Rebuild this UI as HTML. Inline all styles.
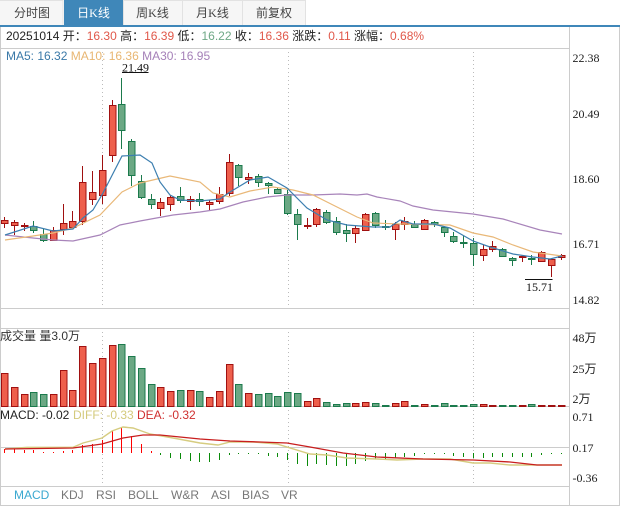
<!DOCTYPE html>
<html><head><meta charset="utf-8"><style>
html,body{margin:0;padding:0;background:#fff;width:620px;height:506px;overflow:hidden}
svg{display:block}
text{font-family:"Liberation Sans","Noto Sans CJK SC",sans-serif;font-size:12px;white-space:pre}
.s{font-family:"Liberation Serif","Noto Sans CJK SC",serif;fill:#222}
.t{fill:#444;text-anchor:middle}
.b{fill:#777}
</style></head><body>
<svg width="620" height="506" viewBox="0 0 620 506" xmlns="http://www.w3.org/2000/svg">
<g fill="#f6f6f6" stroke="#e2e2e2">
<rect x="-1" y="0.5" width="64" height="26"/><rect x="123.500" y="0.5" width="59" height="26"/><rect x="182.500" y="0.5" width="60" height="26"/><rect x="242.500" y="0.5" width="63" height="26"/>
</g>
<rect x="64" y="0" width="59" height="26" fill="#3f87b9"/>
<rect x="0" y="25" width="620" height="2" fill="#3f87b9"/>
<text class="t" x="32" y="17">分时图</text>
<text class="t" x="93.500" y="17" style="fill:#fff">日<tspan style="font-family:'Liberation Serif'">K</tspan>线</text>
<text class="t" x="152.500" y="17">周<tspan style="font-family:'Liberation Serif'">K</tspan>线</text>
<text class="t" x="212.500" y="17">月<tspan style="font-family:'Liberation Serif'">K</tspan>线</text>
<text class="t" x="274" y="17">前复权</text>

<g stroke="#ccc" fill="none">
<path d="M0.500 27V506M569.500 27V506M619.500 27V506M0 505.500H620M0 48.500H569M0 308.500H569M0 328.500H569M0 406.500H569M0 447.500H569M0 486.500H569"/>
</g>
<g stroke="#bbb" fill="none" stroke-dasharray="1 3">
<path d="M102.500 52V308M288.500 52V308M473.500 52V308M102.500 332V406M288.500 332V406M473.500 332V406M102.500 410V486M288.500 410V486M473.500 410V486"/>
</g>

<text x="6" y="40" fill="#222">20251014 开：<tspan fill="#e0584a">16.30</tspan> 高：<tspan fill="#e0584a">16.39</tspan> 低：<tspan fill="#6fa886">16.22</tspan> 收：<tspan fill="#e0584a">16.36</tspan> 涨跌：<tspan fill="#e0584a">0.11</tspan> 涨幅：<tspan fill="#e0584a">0.68%</tspan></text>
<text x="6" y="60" fill="#3a79a8">MA5: 16.32 <tspan fill="#e8b672">MA10: 16.36</tspan> <tspan fill="#a580b8">MA30: 16.95</tspan></text>

<!-- wicks -->
<path fill="none" stroke="#a01010" d="M4.500 217V228M14.500 220V235M24.500 223V231M53.500 227V240M63.500 204V235M72.500 211V227M82.500 166V225M92.500 171V205M102.500 155V204M112.500 100V162M160.500 198V216M170.500 195V211M190.500 196V210M209.500 200V210M219.500 187V204M229.500 154V196M248.500 173V184M307.500 218V229M316.500 208V227M355.500 226V243M365.500 213V231M395.500 222V240M404.500 217V230M424.500 219V230M483.500 245V261M492.500 241V252M522.500 255V262M541.500 251V262M551.500 258V277M561.500 254V260"/>
<path fill="none" stroke="#1b7a4c" d="M33.500 221V233M43.500 229V242M121.500 78V149M131.500 139V186M141.500 175V199M151.500 194V209M180.500 187V203M199.500 193V206M238.500 164V186M258.500 174V187M268.500 182V194M277.500 188V194M287.500 190V215M297.500 209V240M326.500 210V224M336.500 217V235M346.500 224V242M375.500 212V228M385.500 220V230M414.500 221V228M434.500 221V227M444.500 226V237M453.500 232V243M463.500 236V248M473.500 238V266M502.500 248V257M512.500 257V266M531.500 255V265"/>
<!-- bodies -->
<g transform="translate(0.5 0)">
<path fill="#ee5f4c" stroke="#a01010" d="M1 220.500h6.500v3h-6.500zM11 222.500h6.500v3h-6.500zM21 225.500h6.500v1h-6.500zM50 230.500h6.500v10h-6.500zM60 223.500h6.500v6h-6.500zM69 221.500h6.500v6h-6.500zM79 182.500h6.500v39h-6.500zM89 192.500h6.500v7h-6.500zM99 170.500h6.500v25h-6.500zM109 105.500h6.500v50h-6.500zM157 202.500h6.500v6h-6.500zM167 197.500h6.500v7h-6.500zM187 199.500h6.500v2h-6.500zM206 202.500h6.500v2h-6.500zM216 194.500h6.500v7h-6.500zM226 162.500h6.500v31h-6.500zM245 177.500h6.500v2h-6.500zM304 225.500h6.500v1h-6.500zM313 209.500h6.500v15h-6.500zM352 228.500h6.500v5h-6.500zM362 214.500h6.500v16h-6.500zM392 224.500h6.500v5h-6.500zM401 221.500h6.500v3h-6.500zM421 220.500h6.500v9h-6.500zM480 249.500h6.500v6h-6.500zM489 246.500h6.500v3h-6.500zM519 256.500h6.500v1h-6.500zM538 252.500h6.500v9h-6.500zM548 259.500h6.500v6h-6.500zM558 255.500h6.500v2h-6.500z"/>
<path fill="#6ba884" stroke="#1b7a4c" d="M30 226.500h6.500v4h-6.500zM40 234.500h6.500v6h-6.500zM118 104.500h6.500v26h-6.500zM128 141.500h6.500v34h-6.500zM138 181.500h6.500v16h-6.500zM148 199.500h6.500v5h-6.500zM177 196.500h6.500v4h-6.500zM196 199.500h6.500v2h-6.500zM235 165.500h6.500v12h-6.500zM255 176.500h6.500v6h-6.500zM265 183.500h6.500v2h-6.500zM274 189.500h6.500v4h-6.500zM284 194.500h6.500v19h-6.500zM294 214.500h6.500v10h-6.500zM323 212.500h6.500v10h-6.500zM333 221.500h6.500v11h-6.500zM343 230.500h6.500v3h-6.500zM372 213.500h6.500v12h-6.500zM382 226.500h6.500v1h-6.500zM411 224.500h6.500v3h-6.500zM431 222.500h6.500v2h-6.500zM441 227.500h6.500v5h-6.500zM450 236.500h6.500v5h-6.500zM460 242.500h6.500v1h-6.500zM470 243.500h6.500v11h-6.500zM499 249.500h6.500v7h-6.500zM509 258.500h6.500v2h-6.500zM528 258.500h6.500v1h-6.500z"/>
</g>

<!-- MAs -->
<polyline fill="none" stroke="#a884ba" stroke-width="1.200" points="5,235 33,238 53,240 73,241 100,235 120,225 140,221 173,215 200,212 220,209 243,202 267,197 287,195 313,195 340,194 357,195 367,194 377,197 400,201 413,206 433,210 473,214 503,219 540,230 562,234"/>
<polyline fill="none" stroke="#e9b878" stroke-width="1.200" points="5,240 33,236 53,233 73,228 100,215 122,192 140,183 170,176 200,182 213,193 230,197 250,191 273,187 293,190 313,195 333,205 357,217 373,223 400,224 450,225 473,233 493,237 513,245 533,252 562,256"/>
<polyline fill="none" stroke="#3d7fb0" stroke-width="1.200" points="5,235 33,226 53,231 73,229 83,218 93,210 103,193 122,156 140,155 152,163 160,182 170,195 180,200 200,201 220,199 230,192 250,180 268,177 287,188 307,208 327,220 347,225 373,227 390,227 400,220 413,224 433,224 450,228 473,241 490,247 513,254 533,257 550,259 562,256"/>

<text class="s" x="122" y="71.500" style="fill:#111">21.49</text>
<path d="M122 72.500H148.500" stroke="#111"/>
<text class="s" x="526" y="291" style="fill:#111">15.71</text>
<path d="M525 279.500H552.500" stroke="#111"/>

<text class="s" x="572.500" y="62">22.38</text>
<text class="s" x="572.500" y="118">20.49</text>
<text class="s" x="572.500" y="183">18.60</text>
<text class="s" x="572.500" y="248">16.71</text>
<text class="s" x="572.500" y="304">14.82</text>
<text class="s" x="572.500" y="342">48万</text>
<text class="s" x="572.500" y="373">25万</text>
<text class="s" x="572.500" y="403">2万</text>
<text class="s" x="572.500" y="421">0.71</text>
<text class="s" x="572.500" y="452">0.17</text>
<text class="s" x="572.500" y="482">-0.36</text>

<!-- volume -->
<text x="0" y="340" fill="#333">成交量 量3.0万</text>
<g transform="translate(0.5 0)">
<path fill="#ee5f4c" stroke="#a01010" d="M1 373.500h6.500V406.500h-6.500zM11 387.500h6.500V406.500h-6.500zM21 394.500h6.500V406.500h-6.500zM50 394.500h6.500V406.500h-6.500zM60 370.500h6.500V406.500h-6.500zM69 390.500h6.500V406.500h-6.500zM79 346.500h6.500V406.500h-6.500zM89 363.500h6.500V406.500h-6.500zM99 358.500h6.500V406.500h-6.500zM109 345.500h6.500V406.500h-6.500zM157 387.500h6.500V406.500h-6.500zM167 391.500h6.500V406.500h-6.500zM187 390.500h6.500V406.500h-6.500zM206 397.500h6.500V406.500h-6.500zM216 391.500h6.500V406.500h-6.500zM226 364.500h6.500V406.500h-6.500zM245 393.500h6.500V406.500h-6.500zM304 401.500h6.500V406.500h-6.500zM313 398.500h6.500V406.500h-6.500zM352 403.500h6.500V406.500h-6.500zM362 402.500h6.500V406.500h-6.500zM392 403.500h6.500V406.500h-6.500zM401 401.500h6.500V406.500h-6.500zM421 404.500h6.500V406.500h-6.500zM480 404.500h6.500V406.500h-6.500zM489 405.500h6.500V406.500h-6.500zM519 405.500h6.500V406.500h-6.500zM538 405.500h6.500V406.500h-6.500zM548 405.500h6.500V406.500h-6.500zM558 405.500h6.500V406.500h-6.500z"/>
<path fill="#6ba884" stroke="#1b7a4c" d="M30 392.500h6.500V406.500h-6.500zM40 394.500h6.500V406.500h-6.500zM118 344.500h6.500V406.500h-6.500zM128 356.500h6.500V406.500h-6.500zM138 368.500h6.500V406.500h-6.500zM148 384.500h6.500V406.500h-6.500zM177 390.500h6.500V406.500h-6.500zM196 391.500h6.500V406.500h-6.500zM235 384.500h6.500V406.500h-6.500zM255 394.500h6.500V406.500h-6.500zM265 393.500h6.500V406.500h-6.500zM274 396.500h6.500V406.500h-6.500zM284 392.500h6.500V406.500h-6.500zM294 393.500h6.500V406.500h-6.500zM323 402.500h6.500V406.500h-6.500zM333 404.500h6.500V406.500h-6.500zM343 403.500h6.500V406.500h-6.500zM372 403.500h6.500V406.500h-6.500zM382 405.500h6.500V406.500h-6.500zM411 405.500h6.500V406.500h-6.500zM431 405.500h6.500V406.500h-6.500zM441 403.500h6.500V406.500h-6.500zM450 405.500h6.500V406.500h-6.500zM460 405.500h6.500V406.500h-6.500zM470 404.500h6.500V406.500h-6.500zM499 405.500h6.500V406.500h-6.500zM509 405.500h6.500V406.500h-6.500zM528 404.500h6.500V406.500h-6.500z"/>
</g>

<!-- MACD -->
<text x="0" y="419" fill="#222">MACD: -0.02</text>
<text x="73" y="419" fill="#d4ca7c">DIFF: -0.33</text>
<text x="137" y="419" fill="#cf3030">DEA: -0.32</text>
<path fill="none" stroke="#f00" d="M4.500 449V453M14.500 449V453M24.500 450V453M33.500 450V453M43.500 452V453M53.500 452V453M63.500 451V453M72.500 450V453M82.500 445V453M92.500 444V453M102.500 440V453M112.500 431V453M121.500 428V453M131.500 436V453M141.500 444V453M151.500 451V453"/>
<path fill="none" stroke="#0a8a0a" d="M160.500 453V455M170.500 453V458M180.500 453V459M190.500 453V461M199.500 453V462M209.500 453V462M219.500 453V460M229.500 453V455M238.500 453V454M248.500 453V454M258.500 453V454M268.500 453V456M277.500 453V457M287.500 453V460M297.500 453V464M307.500 453V466M316.500 453V464M326.500 453V465M336.500 453V466M346.500 453V466M355.500 453V464M365.500 453V461M375.500 453V459M385.500 453V459M395.500 453V458M404.500 453V457M414.500 453V456M424.500 453V454M434.500 453V454M444.500 453V454M453.500 453V456M463.500 453V457M473.500 453V458M483.500 453V458M492.500 453V457M502.500 453V457M512.500 453V457M522.500 453V457M531.500 453V457M541.500 453V455M551.500 453V454M561.500 453V454"/>
<polyline fill="none" stroke="#d6cc80" stroke-width="1.400" points="5,449 27,447.300 73,447.300 83,443 102,438 112,431 123,427 133,428 150,434 173,438 200,443 218,445 230,442 253,442 277,444 310,454 327,455 347,458 377,459 397,460 423,459 450,459 473,463 490,463 510,465 537,465 562,465"/>
<polyline fill="none" stroke="#c81e1e" stroke-width="1.300" points="5,449 73,448 102,444 123,438 143,435 160,435 200,439 230,441 260,442 287,443 310,447 343,453 377,457 423,459 473,460 510,462 537,465 562,465"/>

<text x="14" y="499" fill="#3aa8d0">MACD</text>
<text class="b" x="61" y="499">KDJ</text>
<text class="b" x="96" y="499">RSI</text>
<text class="b" x="128" y="499">BOLL</text>
<text class="b" x="171" y="499">W&amp;R</text>
<text class="b" x="211" y="499">ASI</text>
<text class="b" x="242" y="499">BIAS</text>
<text class="b" x="281" y="499">VR</text>
</svg>
</body></html>
